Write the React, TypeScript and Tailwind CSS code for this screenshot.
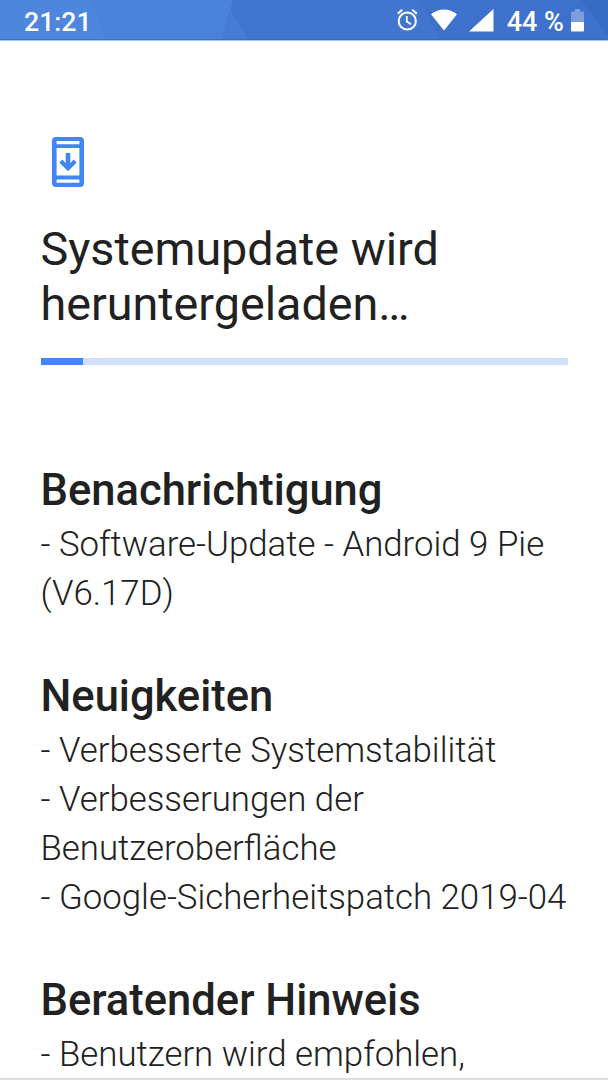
import { FC } from "react";

interface Section {
  title: string;
  lines: string[];
}

const sections: Section[] = [
  {
    title: "Benachrichtigung",
    lines: ["- Software-Update - Android 9 Pie", "(V6.17D)"],
  },
  {
    title: "Neuigkeiten",
    lines: [
      "- Verbesserte Systemstabilität",
      "- Verbesserungen der",
      "Benutzeroberfläche",
      "- Google-Sicherheitspatch 2019-04",
    ],
  },
  {
    title: "Beratender Hinweis",
    lines: ["- Benutzern wird empfohlen,"],
  },
];

// Faceted wallpaper behind the status bar
const StatusBackdrop: FC = () => (
  <svg className="absolute inset-0" width="608" height="41" viewBox="0 0 608 41">
    <rect width="608" height="40" fill="#4175cf" />
    <path d="M0 0H92L106 40H0z" fill="#4e86dd" />
    <path d="M92 0H233L222 40H106z" fill="#4a81da" />
    <path d="M231 10L248 40H222z" fill="#477cd5" />
    <path d="M421 0H581L608 36V40H440z" fill="#3e71cc" />
    <path d="M581 0H608V36z" fill="#386bc3" />
    <rect y="39" width="608" height="1" fill="#3768c4" fillOpacity="0.75" />
    <rect y="40" width="608" height="1" fill="#a9c5f2" />
  </svg>
);

const AlarmIcon: FC = () => (
  <svg width="22" height="24" viewBox="0 0 22 24" fill="none" stroke="#fff">
    <circle cx="10.3" cy="13" r="8.6" strokeWidth="2" />
    <path d="M9.8 8v5.6l4.2 2.6" strokeWidth="1.8" />
    <path d="M.8 5.600l4.500-3.800M15.300 1.800l4.500 3.800" strokeWidth="2.1" />
  </svg>
);

const WifiIcon: FC = () => (
  <svg width="26" height="22" viewBox="0 0 26 22" fill="#fff">
    <path d="M13 21.500L0 5.300C3.800 2 8.300.400 13 .400S22.200 2 26 5.300z" />
  </svg>
);

const SignalIcon: FC = () => (
  <svg width="25" height="23" viewBox="0 0 25 23" fill="#fff">
    <path d="M0 22.500L24.500 0v22.500z" />
  </svg>
);

const BatteryIcon: FC = () => (
  <svg width="13" height="23" viewBox="0 0 13 23" fill="#fff">
    <path d="M4 0h5v2.500h3a1 1 0 0 1 1 1V13H0V3.500a1 1 0 0 1 1-1h3z" fillOpacity="0.32" />
    <path d="M0 13h13v8.500a1 1 0 0 1-1 1H1a1 1 0 0 1-1-1z" />
  </svg>
);

const StatusBar: FC = () => (
  <header className="relative h-[41px] shrink-0 text-[27px] leading-[44px] font-medium text-white">
    <StatusBackdrop />
    <div className="relative flex h-full items-start justify-between pr-6 pl-6">
      <span className="text-[26.7px]">21:21</span>
      <div className="flex items-start">
        <div className="mt-2 mr-[12px]">
          <AlarmIcon />
        </div>
        <div className="mt-[9px] mr-[12px]">
          <WifiIcon />
        </div>
        <div className="mt-[9px] mr-[13px]">
          <SignalIcon />
        </div>
        <span className="mr-[7px]">44 %</span>
        <div className="mt-[9px]">
          <BatteryIcon />
        </div>
      </div>
    </div>
  </header>
);

const SystemUpdateIcon: FC = () => (
  <svg width="32" height="50" viewBox="0 0 32 50" fill="#4285f4">
    <path
      fillRule="evenodd"
      d="M4 0h24a4 4 0 0 1 4 4v42a4 4 0 0 1-4 4H4a4 4 0 0 1-4-4V4a4 4 0 0 1 4-4zM4.600 4v3.300h22.800V4zM4.600 11v27.400h22.800V11zM4.600 42.500v3.200h22.800v-3.200z"
    />
    <path d="M13.700 16h4.600v10l3.400-3.400 3 3L16 34.200l-8.700-8.600 3-3 3.400 3.400z" />
  </svg>
);

const App: FC = () => (
  <div className="flex h-[1080px] w-[608px] flex-col overflow-hidden border-b-2 border-[#dedede] bg-white font-['Roboto',sans-serif] text-[#212121]">
    <StatusBar />
    <main className="min-h-0 flex-1 overflow-hidden px-[40.5px]">
      <div className="mt-[96px] ml-[11px] h-[50px]">
        <SystemUpdateIcon />
      </div>
      <h1 className="mt-[35px] text-[46.7px] leading-[55px]">
        Systemupdate wird
        <br />
        heruntergeladen…
      </h1>
      <div className="mt-[26px] h-[7px] bg-[#cfdffc]">
        <div className="h-full w-[42px] bg-[#4285f4]" />
      </div>
      <div className="mt-[99px] flex flex-col gap-[52px]">
        {sections.map(({ title, lines }) => (
          <section key={title}>
            <h2 className="pb-[2px] text-[43.5px] leading-[54px] font-medium">{title}</h2>
            {lines.map((line) => (
              <p key={line} className="text-[34.8px] leading-[49px] font-light whitespace-nowrap">
                {line}
              </p>
            ))}
          </section>
        ))}
      </div>
    </main>
  </div>
);

export default App;
